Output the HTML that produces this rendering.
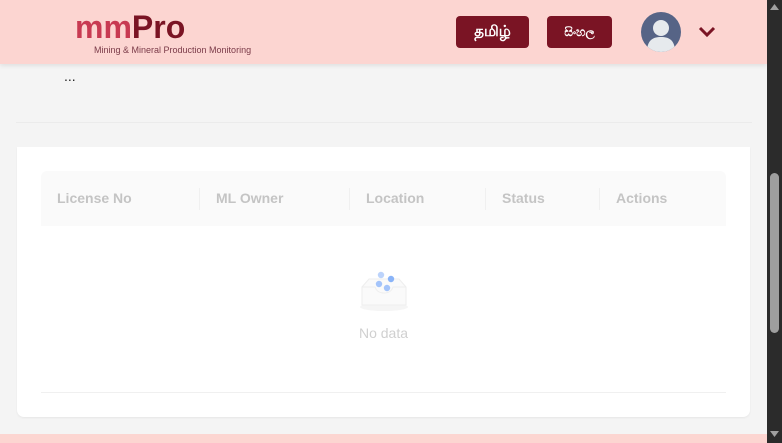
<!DOCTYPE html>
<html><head><style>
*{margin:0;padding:0;box-sizing:border-box}
body{width:782px;height:443px;overflow:hidden;background:#f4f4f4;font-family:"Liberation Sans","Noto Sans CJK SC",sans-serif;position:relative}
.hdr{position:absolute;left:0;top:0;width:767px;height:64px;background:#fcd5d1;box-shadow:0 2px 4px rgba(0,0,0,.08)}
.logo{position:absolute;left:75px;top:10px;font-size:32px;font-weight:bold;letter-spacing:0px;line-height:34px}
.logo .a{color:#c83a52}.logo .b{color:#7a1424}
.sub{position:absolute;left:94px;top:45px;font-size:9px;color:#7a3a48}
.btn{position:absolute;top:16px;height:32px;background:#7a1424;color:#fff;border-radius:4px;font-family:"Liberation Sans","DejaVu Sans",sans-serif;font-size:15px;display:flex;align-items:center;justify-content:center;font-weight:bold}
.av{position:absolute;left:641px;top:12px;width:40px;height:40px;border-radius:50%;background:#566486;overflow:hidden}
.sb{position:absolute;left:767px;top:0;width:15px;height:443px;background:#2b2b2b}
.thumb{position:absolute;left:770px;top:173px;width:9px;height:160px;background:#9e9e9e;border-radius:5px}
.line{position:absolute;left:16px;top:122px;width:736px;height:1px;background:#ebebeb}
.card{position:absolute;left:17px;top:147px;width:733px;height:270px;background:#fff;border-radius:0 0 7px 7px;box-shadow:0 1px 2px rgba(0,0,0,.06)}
.th{position:absolute;left:24px;top:24px;width:685px;height:55px;background:#fafafa;border-radius:6px 6px 0 0}
.th span{position:absolute;top:19px;font-size:14px;font-weight:bold;color:#c4c4c4}
.th i{position:absolute;top:17px;width:1px;height:22px;background:#f0f0f0}
.foot{position:absolute;left:0;top:434px;width:767px;height:9px;background:#fcd5d1}
</style></head><body>
<div class="hdr">
<div class="logo"><span class="a">mm</span><span class="b">Pro</span></div>
<div class="sub">Mining &amp; Mineral Production Monitoring</div>
<div class="btn" style="left:456px;width:73px">தமிழ்</div>
<div class="btn" style="left:547px;width:65px;font-size:12px">සිංහල</div>
<div class="av"><svg width="40" height="40" viewBox="0 0 40 40"><circle cx="20" cy="16" r="8" fill="#e6eaed"/><path d="M6 40 C6 28 12 25 20 25 C28 25 34 28 34 40Z" fill="#e6eaed"/></svg></div>
<svg style="position:absolute;left:698px;top:26px" width="18" height="12" viewBox="0 0 18 12"><path d="M2 2 L9 9 L16 2" stroke="#7a1424" stroke-width="3" fill="none"/></svg>
</div>
<div style="position:absolute;left:64px;top:68px;font-size:14px;color:#222">...</div>
<div class="line"></div>
<div class="card">
<div class="th">
<span style="left:16px">License No</span><i style="left:158px"></i>
<span style="left:175px">ML Owner</span><i style="left:308px"></i>
<span style="left:325px">Location</span><i style="left:444px"></i>
<span style="left:461px">Status</span><i style="left:558px"></i>
<span style="left:575px">Actions</span>
</div>
<svg style="position:absolute;left:340px;top:120px" width="60" height="50" viewBox="0 0 60 50">
<ellipse cx="27" cy="40" rx="24" ry="4" fill="#f5f5f5"/>
<path d="M5 20 L12 12 L42 12 L49 20 L49 38 L5 38Z" fill="#fafafa" stroke="#eee"/>
<path d="M5 20 L18 20 Q20 26 27 26 Q34 26 36 20 L49 20" fill="none" stroke="#eee"/>
<circle cx="24" cy="8" r="3.2" fill="#bcd3fb"/><circle cx="34" cy="12" r="3.2" fill="#8ab4f8"/><circle cx="22" cy="17" r="3.2" fill="#a4c4fa"/><circle cx="30" cy="21" r="3.2" fill="#a4c4fa"/>
</svg>
<div style="position:absolute;left:0;width:733px;top:178px;text-align:center;font-size:14px;color:#d0d0d0">No data</div>
<div style="position:absolute;left:24px;top:245px;width:685px;height:1px;background:#f0f0f0"></div>
</div>
<div class="foot"></div>
<div class="sb"></div><div class="thumb"></div>
<svg style="position:absolute;left:770px;top:4px" width="9" height="6"><path d="M0 6 L4.5 0 L9 6Z" fill="#a0a0a0"/></svg>
<svg style="position:absolute;left:770px;top:431px" width="9" height="6"><path d="M0 0 L4.5 6 L9 0Z" fill="#a0a0a0"/></svg>
</body></html>
